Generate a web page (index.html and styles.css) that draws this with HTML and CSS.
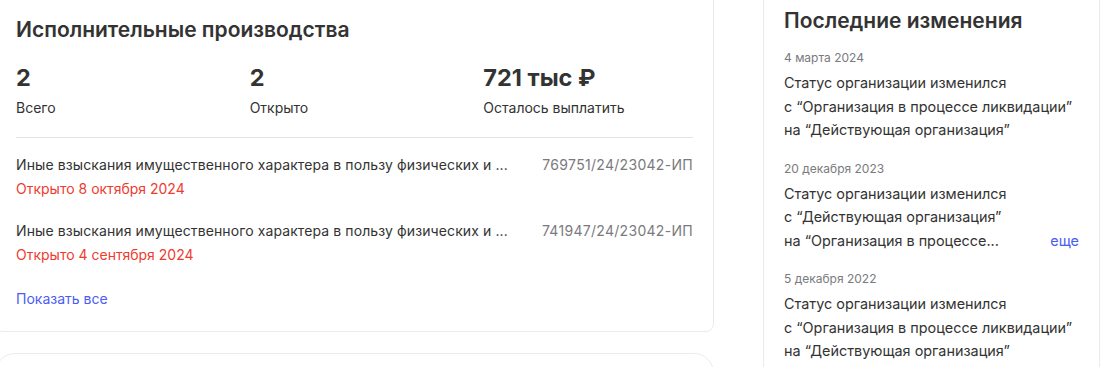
FILE: index.html
```html
<!DOCTYPE html>
<html lang="ru">
<head>
    <meta charset="UTF-8">
    <meta name="viewport" content="width=device-width, initial-scale=1.0">
    <title>Исполнительные производства</title>
    <link rel="stylesheet" href="styles.css">
</head>
<body>

    <div class="page">
        <div class="main">
            <div class="card">
                <h2 class="card-title">Исполнительные производства</h2>
                <div class="stats">
                    <div class="stat">
                        <div class="stat-value">2</div>
                        <div class="stat-label">Всего</div>
                    </div>
                    <div class="stat">
                        <div class="stat-value">2</div>
                        <div class="stat-label">Открыто</div>
                    </div>
                    <div class="stat">
                        <div class="stat-value">721 тыс ₽</div>
                        <div class="stat-label">Осталось выплатить</div>
                    </div>
                </div>
                <div class="cases">
                    <div class="case">
                        <div class="case-info">
                            <div class="case-name">Иные взыскания имущественного характера в пользу физических и ...</div>
                            <div class="case-date">Открыто 8 октября 2024</div>
                        </div>
                        <div class="case-number">769751/24/23042-ИП</div>
                    </div>
                    <div class="case">
                        <div class="case-info">
                            <div class="case-name">Иные взыскания имущественного характера в пользу физических и ...</div>
                            <div class="case-date">Открыто 4 сентября 2024</div>
                        </div>
                        <div class="case-number">741947/24/23042-ИП</div>
                    </div>
                </div>
                <a class="show-all" href="#">Показать все</a>
            </div>
            <div class="card card-next"></div>
        </div>

        <div class="side">
            <h2 class="side-title">Последние изменения</h2>
            <div class="change">
                <div class="change-date">4 марта 2024</div>
                <div class="change-text">Статус организации изменился<br>с “Организация в процессе ликвидации”<br>на “Действующая организация”</div>
            </div>
            <div class="change">
                <div class="change-date">20 декабря 2023</div>
                <div class="change-text">Статус организации изменился<br>с “Действующая организация”</div>
                <div class="change-last">
                    <span class="change-text">на “Организация в процессе...</span>
                    <a class="more" href="#">еще</a>
                </div>
            </div>
            <div class="change">
                <div class="change-date">5 декабря 2022</div>
                <div class="change-text">Статус организации изменился<br>с “Организация в процессе ликвидации”<br>на “Действующая организация”</div>
            </div>
        </div>
    </div>

</body>
</html>
```

FILE: styles.css
```css
body {
    margin: 0;
    background-color: #fff;
    color: #333;
    font-family: Inter, "Noto Sans", sans-serif;
    overflow: hidden;
}
a {
    text-decoration: none;
}
.page {
    display: flex;
    align-items: flex-start;
    gap: 49px;
    margin-left: -5px;
}
.main {
    width: 719px;
    display: flex;
    flex-direction: column;
    gap: 21px;
    margin-top: -21px;
}
.card {
    border: 1px solid #ebebef;
    border-radius: 8px;
    padding: 20px;
    background-color: #fff;
}
.card-title {
    margin: 0;
    font-size: 21px;
    line-height: 28px;
    font-weight: 600;
    padding-top: 16px;
}
/* Stats row */
.stats {
    display: grid;
    grid-template-columns: repeat(3, 1fr);
    gap: 24px;
    margin-top: 19px;
    padding-bottom: 19px;
    border-bottom: 1px solid #e3e3e6;
}
.stat-value {
    font-size: 23.5px;
    line-height: 30px;
    font-weight: 700;
}
.stat-label {
    font-size: 14px;
    line-height: 20px;
    margin-top: 5px;
}
/* Case list */
.cases {
    display: flex;
    flex-direction: column;
    gap: 18px;
    margin-top: 15px;
}
.case {
    display: flex;
    justify-content: space-between;
    gap: 20px;
}
.case-name {
    font-size: 14px;
    line-height: 24px;
    letter-spacing: 0.1px;
    white-space: nowrap;
}
.case-date {
    font-size: 14px;
    line-height: 24px;
    color: #ef3a2f;
}
.case-number {
    font-size: 14px;
    line-height: 24px;
    color: #7a7a7e;
    letter-spacing: 0.3px;
    white-space: nowrap;
}
.show-all {
    display: inline-block;
    margin-top: 20px;
    font-size: 14px;
    line-height: 24px;
    color: #4b5cf5;
}
.card-next {
    border-radius: 20px;
    height: 60px;
}
/* Side panel */
.side {
    width: 295px;
    border: 1px solid #ebebef;
    border-radius: 8px;
    padding: 20px;
    margin-top: -14px;
    height: 420px;
}
.side-title {
    margin: 0;
    font-size: 21px;
    line-height: 28px;
    font-weight: 600;
}
.change {
    margin-top: 14px;
}
.change + .change {
    margin-top: 18px;
}
.change-date {
    font-size: 12px;
    line-height: 18px;
    color: #7a7a7e;
}
.change-text {
    font-size: 14.4px;
    line-height: 23.5px;
    margin-top: 4px;
    white-space: nowrap;
}
.change-last {
    display: flex;
    justify-content: space-between;
    align-items: baseline;
}
.change-last .change-text {
    margin-top: 0;
}
.more {
    font-size: 14.4px;
    color: #4b5cf5;
}
```
